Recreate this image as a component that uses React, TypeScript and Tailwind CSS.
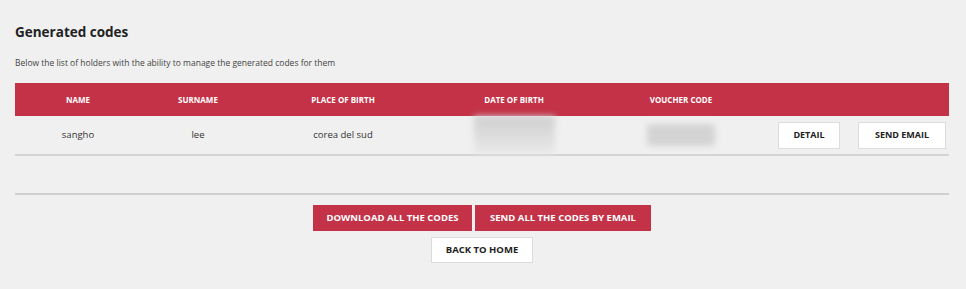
const cols = [
  { label: "Name", w: "w-[126px]" },
  { label: "Surname", w: "w-[114px]" },
  { label: "Place of birth", w: "w-[176px]" },
  { label: "Date of birth", w: "w-[166px]" },
  { label: "Voucher code", w: "w-[168px]" },
];

export default function App() {
  return (
    <div className="min-h-[289px] w-full bg-[#f0f0f0] px-[15px] pt-[22px] font-['Open_Sans',sans-serif] text-[#333]">
      <h1 className="text-[13.5px] font-bold leading-[20px] text-[#222]">Generated codes</h1>
      <p className="mt-[15px] text-[8.5px] leading-[12px] text-[#444]">
        Below the list of holders with the ability to manage the generated codes for them
      </p>

      {/* table */}
      <div className="mt-[14px] w-[934px]">
        <div className="flex h-[33px] items-center bg-[#c33247] text-[8px] font-bold uppercase text-white">
          {cols.map((c) => (
            <div key={c.label} className={`${c.w} text-center`}>
              {c.label}
            </div>
          ))}
        </div>
        <div className="flex h-[40px] items-center border-b-2 border-[#d4d4d4] text-[9.5px] text-[#333]">
          <div className="w-[126px] text-center">sangho</div>
          <div className="w-[114px] text-center">lee</div>
          <div className="w-[176px] text-center">corea del sud</div>
          <div className="flex h-full w-[166px] justify-center">
            <div className="h-[37px] w-[81px] bg-gradient-to-b from-[#cfcfcf] via-[#dcdcdc] to-[#e8e8e8] blur-[3px]" />
          </div>
          <div className="flex w-[168px] justify-center">
            <div className="h-[22px] w-[68px] rounded bg-[#d3d3d3] blur-[3px]" />
          </div>
          <div className="flex flex-1 items-center justify-end gap-[18px] pr-[3px]">
            <button className="h-[27px] w-[62px] border border-[#dcdcdc] bg-white text-[9px] font-bold uppercase text-[#222]">
              Detail
            </button>
            <button className="h-[27px] w-[88px] border border-[#dcdcdc] bg-white text-[9px] font-bold uppercase text-[#222]">
              Send email
            </button>
          </div>
        </div>
      </div>

      <div className="mt-[37px] w-[934px] border-t-2 border-[#cfcfcf]" />

      <div className="mt-[10px] flex w-[934px] justify-center gap-[3px]">
        <button className="h-[26px] w-[159px] bg-[#c33247] text-[9.5px] font-bold uppercase text-white">
          Download all the codes
        </button>
        <button className="h-[26px] w-[176px] bg-[#c33247] text-[9.5px] font-bold uppercase text-white">
          Send all the codes by email
        </button>
      </div>
      <div className="mt-[6px] flex w-[934px] justify-center">
        <button className="h-[26px] w-[102px] border border-[#dcdcdc] bg-white text-[9.5px] font-bold uppercase text-[#222]">
          Back to home
        </button>
      </div>
    </div>
  );
}
